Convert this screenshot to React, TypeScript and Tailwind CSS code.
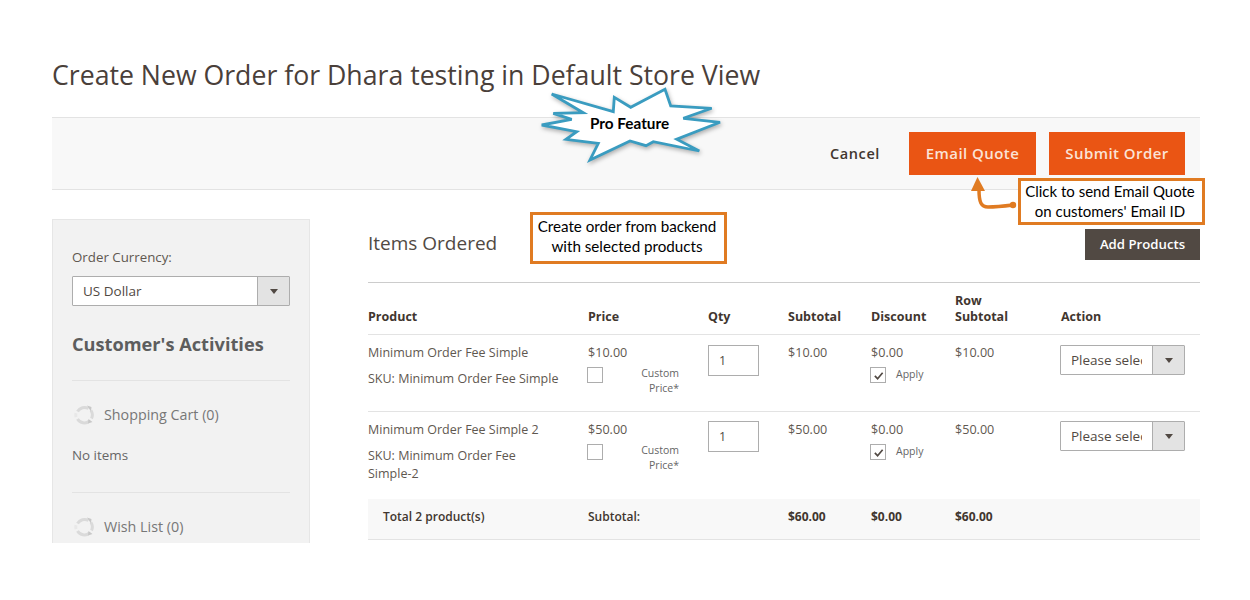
import React from 'react';

const Spinner = () => (
  <svg viewBox="0 0 20 20" className="w-[20px] h-[20px] shrink-0 ml-[2px]" fill="none" stroke="#dadada" strokeWidth="3">
    <path d="M3.5 6.5a8 8 0 0 1 11-3" />
    <path d="M17 5.5a8 8 0 0 1 0.5 8" />
    <path d="M15.5 16a8 8 0 0 1-12-2" />
    <path d="M2 12a8 8 0 0 1 0-4" stroke="#e8e8e8" />
    <path d="M13 0.5 17.5 2 17 6.5Z M18.5 17 14 18.5 14.5 14Z" fill="#c8c8c8" stroke="none" />
  </svg>
);

const SelectBox = ({ label, className }: { label: string; className: string }) => (
  <div className={`flex h-[30px] border border-[#adadad] rounded-[1px] bg-white ${className}`}>
    <div className="flex-1 min-w-0 overflow-hidden whitespace-nowrap ml-[10px] mr-[10px] leading-[28px] text-[13.5px] text-[#514943]">{label}</div>
    <div className="w-[32px] shrink-0 flex items-center justify-center border-l border-[#adadad] bg-[#e3e3e3]">
      <div className="w-0 h-0 border-x-[4px] border-x-transparent border-t-[5px] border-t-[#514943]" />
    </div>
  </div>
);

const Check = ({ on }: { on?: boolean }) => (
  <div className="w-[16px] h-[16px] -ml-px border border-[#adadad] bg-white flex items-center justify-center shrink-0">
    {on && (
      <svg viewBox="0 0 12 12" className="w-[11px] h-[11px]" fill="none" stroke="#514943" strokeWidth="1.8">
        <path d="M2 6.5 5 9.5 10.5 3" />
      </svg>
    )}
  </div>
);

const rowGrid = 'grid grid-cols-[220px_120px_80px_83px_84px_106px_139px]';

const Row = ({ name, sku, price, height, last }: { name: string; sku: string; price: string; height: string; last?: boolean }) => (
  <div className={`${rowGrid} ${height} pt-[10px] ${last ? '' : 'border-b border-[#e3e3e3]'} text-[12.6px] text-[#5f5850]`}>
    <div className="pr-[28px] text-[12.5px]">
      <div className="leading-[15px]">{name}</div>
      <div className="mt-[10px] leading-[18px]">{sku}</div>
    </div>
    <div>
      <div className="leading-[15px]">{price}</div>
      <div className="flex mt-[7px] w-[91px] justify-between">
        <Check />
        <div className="text-right text-[10.5px] leading-[15px] text-[#666] -mt-px">Custom<br />Price*</div>
      </div>
    </div>
    <div className={last ? '-mt-px' : ''}>
      <div className="w-[51px] h-[31px] border border-[#adadad] bg-white text-[12.5px] leading-[29px] px-[10px] text-[#514943]">1</div>
    </div>
    <div className="leading-[15px]">{price}</div>
    <div>
      <div className="leading-[15px]">$0.00</div>
      <div className="flex items-center gap-[10px] mt-[7px]">
        <Check on />
        <span className="text-[10.5px] text-[#666]">Apply</span>
      </div>
    </div>
    <div className="leading-[15px]">{price}</div>
    <div className={last ? '-mt-px' : ''}>
      <SelectBox label="Please select" className="w-[125px] -ml-px" />
    </div>
  </div>
);

export default function App() {
  return (
    <div className="relative w-[1250px] h-[600px] overflow-hidden bg-white font-['Open_Sans',sans-serif]">
      <div className="px-[52px] pt-[56px] pr-[50px]">
        <h1 className="text-[26.66px] leading-[38px] text-[#4a403a] whitespace-nowrap">Create New Order for Dhara testing in Default Store View</h1>

        <div className="mt-[23px] h-[73px] border-y border-[#e3e3e3] bg-[#f8f8f8] flex items-start justify-end pt-[14px] pr-[15px]">
          <span className="text-[14.5px] font-semibold tracking-[0.6px] text-[#41362f] mr-[29px] mt-[11px]">Cancel</span>
          <button className="w-[127px] h-[43px] bg-[#ea5514] text-[#fbe3d6] text-[15px] font-semibold tracking-[0.45px]">Email Quote</button>
          <button className="ml-[13px] w-[136px] h-[43px] bg-[#ea5514] text-[#fbe3d6] text-[15px] font-semibold tracking-[0.45px]">Submit Order</button>
        </div>

        <div className="mt-[29px] flex items-start h-[325px]">
          <aside className="w-[258px] h-[324px] overflow-hidden shrink-0 bg-[#f2f2f2] border-x border-t border-[#e6e6e6] px-[19px] pt-[28px] text-[#5f5850]">
            <div className="text-[13.3px] leading-[18px]">Order Currency:</div>
            <SelectBox label="US Dollar" className="mt-[10px] w-[218px]" />
            <div className="mt-[25px] text-[18.2px] font-bold leading-[26px] text-[#5d5d5d]">Customer's Activities</div>
            <div className="mt-[23px] border-t border-[#e3e3e3]" />
            <div className="mt-[23px] flex items-center gap-[10px] text-[14.3px] text-[#777]">
              <Spinner />
              <span>Shopping Cart (0)</span>
            </div>
            <div className="mt-[21px] text-[13.4px] leading-[18px] text-[#666]">No items</div>
            <div className="mt-[28px] border-t border-[#e3e3e3]" />
            <div className="mt-[23px] flex items-center gap-[10px] text-[14.3px] text-[#777]">
              <Spinner />
              <span>Wish List (0)</span>
            </div>
          </aside>

          <main className="ml-[58px] flex-1 min-w-0">
            <div className="flex justify-between items-start h-[64px] border-b border-[#cccccc]">
              <h2 className="mt-[11px] text-[19px] leading-[26px] text-[#514943]">Items Ordered</h2>
              <button className="mt-[10px] w-[115px] h-[31px] bg-[#514943] text-white text-[13.2px] font-semibold">Add Products</button>
            </div>
            <div className={`${rowGrid} h-[52px] items-end pb-[9px] border-b border-[#e3e3e3] text-[12.5px] font-bold leading-[16px] text-[#41362f]`}>
              <div>Product</div>
              <div>Price</div>
              <div>Qty</div>
              <div>Subtotal</div>
              <div>Discount</div>
              <div>Row<br />Subtotal</div>
              <div>Action</div>
            </div>
            <Row name="Minimum Order Fee Simple" sku="SKU: Minimum Order Fee Simple" price="$10.00" height="h-[77px]" />
            <Row name="Minimum Order Fee Simple 2" sku="SKU: Minimum Order Fee Simple-2" price="$50.00" height="h-[87px]" last />
            <div className={`${rowGrid} h-[41px] items-center pb-[5px] bg-[#f8f8f8] border-b border-[#e3e3e3] text-[12px] font-semibold text-[#41362f]`}>
              <div className="pl-[15px]">Total 2 product(s)</div>
              <div className="col-span-2">Subtotal:</div>
              <div className="font-bold">$60.00</div>
              <div className="font-bold">$0.00</div>
              <div className="font-bold">$60.00</div>
              <div />
            </div>
          </main>
        </div>
      </div>

      {/* annotations sitting on top of the screenshot */}
      <svg viewBox="0 0 184 80" className="absolute left-[539px] top-[87px] w-[184px] h-[80px] drop-shadow-[1px_2px_2px_rgba(0,0,0,0.3)]">
        <polygon
          points="12.7,7 44.3,25.7 14.3,26.3 32.7,32.3 2.7,38 37.7,44.7 27,52.3 59.3,56.3 51,73 91,54 107,58.7 114.3,54.7 160.3,64 137.7,52.3 181,35.3 144.3,31.3 172.7,21.3 131.7,19 126,2.3 91.7,20.3 75.3,10.3 74.3,24.7"
          fill="white"
          stroke="#3a9cc0"
          strokeWidth="2.8"
          strokeLinejoin="miter"
        />
      </svg>
      <div className="absolute left-[590px] top-[114px] text-[15.3px] font-bold leading-[18px] text-black font-['Lato',sans-serif]">Pro Feature</div>

      <div className="absolute left-[530px] top-[212px] w-[197px] h-[52px] border-[3px] border-[#e07b22] bg-white text-center text-[15.2px] leading-[20px] pt-[1px] pr-[3px] text-black font-['Lato',sans-serif] whitespace-nowrap">
        Create order from backend<br />with selected products
      </div>

      <div className="absolute left-[1018px] top-[178px] w-[187px] h-[47px] border-[3px] border-[#e07b22] bg-white text-center text-[15px] leading-[20px] pr-[3px] text-black font-['Lato',sans-serif] whitespace-nowrap">
        Click to send Email Quote<br />on customers' Email ID
      </div>

      <svg viewBox="0 0 50 40" className="absolute left-[968px] top-[175px] w-[50px] h-[40px]">
        <path d="M11 15C11 27 13 32 20 32 28 32 37 31 45 30" fill="none" stroke="#e07b22" strokeWidth="3.5" />
        <path d="M9.5 2 3 16H17Z" fill="#e07b22" />
        <circle cx="45" cy="30" r="3.2" fill="#e07b22" />
      </svg>
    </div>
  );
}
